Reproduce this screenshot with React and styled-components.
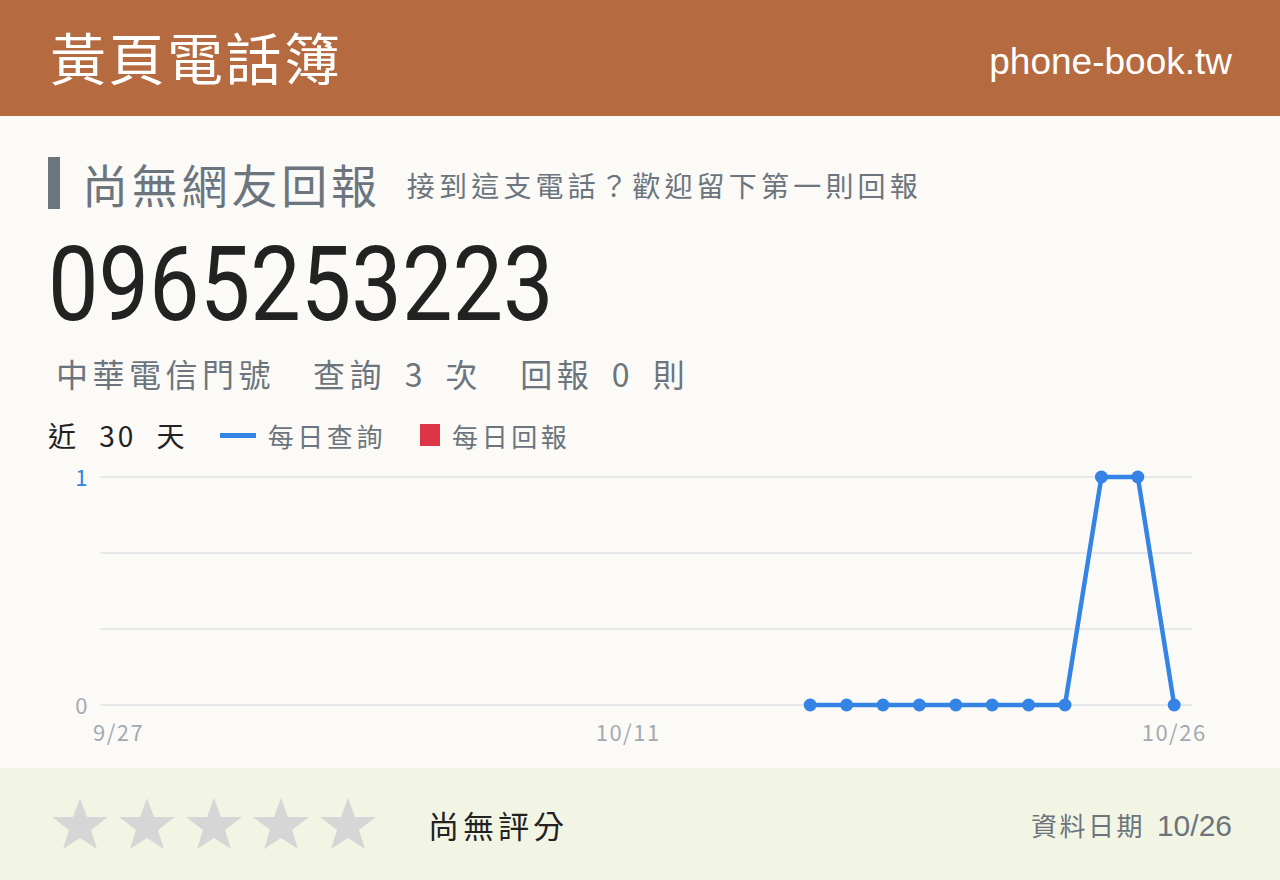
import React from 'react';
import styled, { createGlobalStyle } from 'styled-components';

const Global = createGlobalStyle`
  html, body {
    margin: 0;
    padding: 0;
    background: #fbfaf6;
    font-family: "Noto Sans CJK TC", "Noto Sans", sans-serif;
  }
`

const Page = styled.div`
  width: 1280px;
  height: 880px;
  display: flex;
  flex-direction: column;
  background: #fbfaf6;
  overflow: hidden;
`

const Header = styled.header`
  height: 116px;
  display: flex;
  align-items: center;
  justify-content: space-between;
  padding: 0 48px 0 50px;
  background: #b56a40;
  color: #fff;
`

const Brand = styled.div`
  font-size: 56px;
  letter-spacing: 2.5px;
  line-height: 1;
  margin-top: -4px;
`

const Domain = styled.div`
  font-family: "Liberation Sans", Arial, sans-serif;
  font-size: 37px;
  line-height: 1;
  margin-top: 6px;
`

const Main = styled.main`
  flex: 1;
  display: flex;
  flex-direction: column;
`

const Info = styled.div`
  padding: 40px 48px 0;
  display: flex;
  flex-direction: column;
`

const TitleRow = styled.div`
  display: flex;
  align-items: center;
  gap: 26px;
  height: 54px;
`

const Title = styled.h1`
  margin: 0;
  padding-left: 22px;
  border-left: 12px solid #6c757d;
  font-size: 46px;
  font-weight: 400;
  letter-spacing: 3.8px;
  line-height: 52px;
  color: #6c757d;
`

const Sub = styled.span`
  font-size: 28px;
  letter-spacing: 4.2px;
  color: #6c757d;
  padding-top: 4px;
`

const Number = styled.div`
  font-family: Roboto, "Noto Sans", sans-serif;
  font-size: 104px;
  line-height: 1;
  color: #222;
  margin-top: 23px;
  transform: scaleX(0.865);
  transform-origin: left center;
`

const Stats = styled.div`
  display: flex;
  gap: 38px;
  margin-top: 15px;
  margin-left: 8px;
  font-size: 32px;
  letter-spacing: 4.5px;
  line-height: 42px;
  color: #6c757d;
  word-spacing: 7px;
`

const Legend = styled.div`
  display: flex;
  align-items: center;
  margin-top: 20px;
  height: 42px;
`

const Range = styled.span`
  font-size: 28px;
  letter-spacing: 3px;
  color: #222;
  margin-right: 32px;
  word-spacing: 11px;
`

const Key = styled.span`
  display: flex;
  align-items: center;
  gap: 12px;
  margin-right: 34px;
  font-size: 26px;
  letter-spacing: 3.6px;
  color: #6c757d;
  &::before {
    content: "";
    display: block;
    width: ${p => (p.$square ? '20px' : '36px')};
    height: ${p => (p.$square ? '22px' : '5px')};
    background: ${p => p.$color};
  }
`

const Chart = styled.svg`
  display: block;
  width: 1280px;
  height: 306px;
  margin-top: 2px;
`

const Footer = styled.footer`
  height: 112px;
  display: flex;
  align-items: center;
  padding: 0 48px 0 52px;
  background: #f2f5e3;
`

const Stars = styled.div`
  display: flex;
  gap: 11px;
`

const Rating = styled.span`
  margin-left: 52px;
  font-size: 31px;
  letter-spacing: 4px;
  color: #222;
`

const Stamp = styled.span`
  margin-left: auto;
  font-size: 26px;
  color: #6c757d;
  letter-spacing: 2.5px;
  b {
    font-family: "Liberation Sans", Arial, sans-serif;
    font-weight: 400;
    font-size: 30px;
    margin-left: 12px;
    letter-spacing: 0;
  }
`

const Star = () => (
  <svg width="56" height="56" viewBox="0 0 56 56">
    <polygon
      points="28,2 35,21 56,21 39,34 45,53 28,42 11,53 17,34 0,21 21,21"
      fill="#d6d6d6"
    />
  </svg>
)

const BLUE = '#3484e6'
const X0 = 118.6
const STEP = 36.4
const Y1 = 19
const Y0 = 247

const values = [0, 0, 0, 0, 0, 0, 0, 0, 1, 1, 0]
const points = values.map((v, i) => [X0 + (19 + i) * STEP, v ? Y1 : Y0])

const Grid = () => (
  <Chart viewBox="0 0 1280 306">
    {[Y1, 95, 171, Y0].map(y => (
      <line key={y} x1="100" x2="1192" y1={y} y2={y} stroke="#e6e8ec" strokeWidth="2" />
    ))}
    <g fontFamily="'Noto Sans CJK TC', 'Noto Sans', sans-serif" fontSize="22" letterSpacing="1.5">
      <text x="89" y="28" fill={BLUE} textAnchor="end">1</text>
      <text x="89" y="256" fill="#a3aab2" textAnchor="end">0</text>
      <text x={X0} y="283" fill="#a3aab2" textAnchor="middle">9/27</text>
      <text x={X0 + 14 * STEP} y="283" fill="#a3aab2" textAnchor="middle">10/11</text>
      <text x={X0 + 29 * STEP} y="283" fill="#a3aab2" textAnchor="middle">10/26</text>
    </g>
    <polyline
      points={points.map(p => p.join(',')).join(' ')}
      fill="none"
      stroke={BLUE}
      strokeWidth="4.5"
      strokeLinejoin="round"
    />
    {points.map(([x, y]) => (
      <circle key={x} cx={x} cy={y} r="6.5" fill={BLUE} />
    ))}
  </Chart>
)

export default function App() {
  return (
    <Page>
      <Global />
      <Header>
        <Brand>黃頁電話簿</Brand>
        <Domain>phone-book.tw</Domain>
      </Header>
      <Main>
        <Info>
          <TitleRow>
            <Title>尚無網友回報</Title>
            <Sub>接到這支電話？歡迎留下第一則回報</Sub>
          </TitleRow>
          <Number>0965253223</Number>
          <Stats>
            <span>中華電信門號</span>
            <span>查詢 3 次</span>
            <span>回報 0 則</span>
          </Stats>
          <Legend>
            <Range>近 30 天</Range>
            <Key $color={BLUE}>每日查詢</Key>
            <Key $color="#dc3545" $square>每日回報</Key>
          </Legend>
        </Info>
        <Grid />
      </Main>
      <Footer>
        <Stars>
          {[0, 1, 2, 3, 4].map(i => <Star key={i} />)}
        </Stars>
        <Rating>尚無評分</Rating>
        <Stamp>資料日期<b>10/26</b></Stamp>
      </Footer>
    </Page>
  )
}
